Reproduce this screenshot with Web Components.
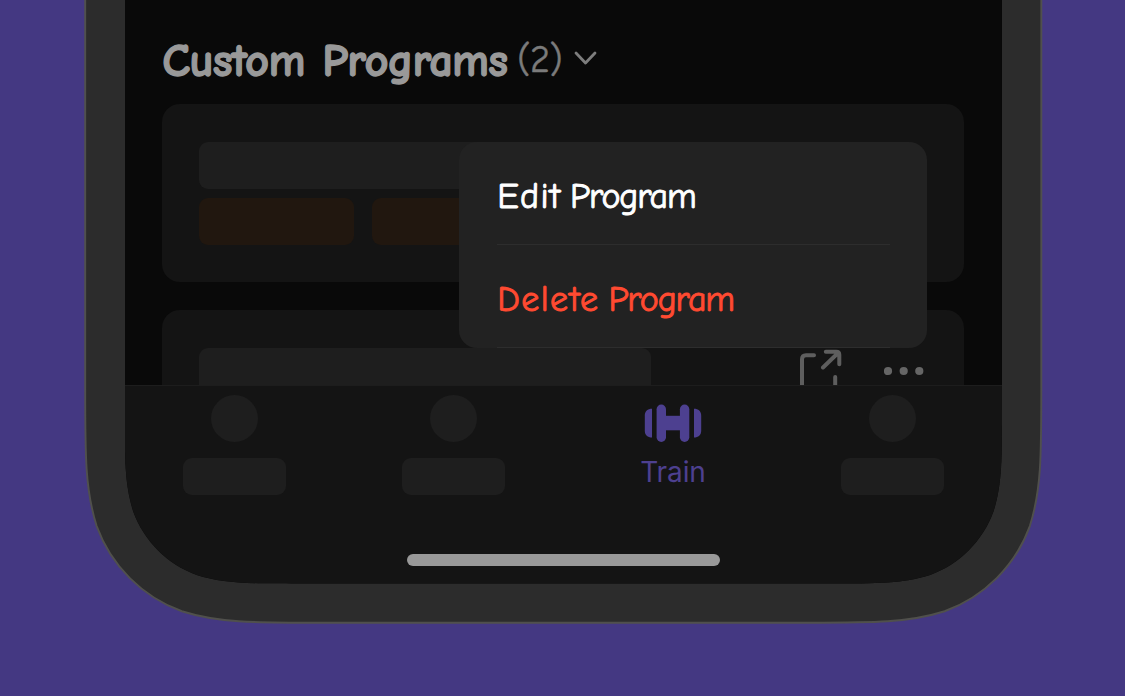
<!DOCTYPE html>
<html lang="en"><head><meta charset="utf-8"><title>Custom Programs</title>
<style>
html,body{margin:0;height:100%;overflow:hidden;background:#443882}
body{font-family:"Comic Sans MS","Comic Neue","Open Sans",sans-serif}
</style></head><body>
<phone-frame>
  <program-list>
    <section-title count="(2)">Custom Programs</section-title>
    <program-card>
      <skeleton-block style="--w:452px;--h:47px"></skeleton-block>
      <skeleton-block slot="tags" style="--w:155px;--h:47px;--c:#21170f"></skeleton-block>
      <skeleton-block slot="tags" style="--w:155px;--h:47px;--c:#21170f"></skeleton-block>
    </program-card>
    <program-card>
      <skeleton-block style="--w:452px;--h:47px"></skeleton-block>
      <card-actions slot="actions"></card-actions>
    </program-card>
  </program-list>
  <context-menu slot="overlay">
    <menu-item><span style="letter-spacing:1.2px">Edit </span>Program</menu-item>
    <menu-item style="color:#ff4a31"><span style="letter-spacing:1.4px">Delete </span>Program</menu-item>
  </context-menu>
  <tab-bar slot="tabs">
    <tab-item></tab-item><tab-item></tab-item><tab-item active>Train</tab-item><tab-item></tab-item>
  </tab-bar>
</phone-frame>
<script>
const define=(name,html)=>customElements.define(name,class extends HTMLElement{
  constructor(){super();this.attachShadow({mode:'open'}).innerHTML=html}
});

// Continuous-curvature corner on both lower corners of a w by h box.
const shape=(x,w,h,r)=>{
  const R=x+w,p=(a,b)=>`${(x+a*r).toFixed(2)} ${(h-b*r).toFixed(2)}`,q=(a,b)=>`${(R-a*r).toFixed(2)} ${(h-b*r).toFixed(2)}`;
  return `M${x} -5H${R}L${q(0,1.52866)}C${q(0,1.08849)} ${q(0,.86841)} ${q(.07491,.63149)}C${q(.16906,.37282)} ${q(.37282,.16906)} ${q(.63149,.07491)}C${q(.86841,0)} ${q(1.08849,0)} ${q(1.52866,0)}L${p(1.52866,0)}C${p(1.08849,0)} ${p(.86841,0)} ${p(.63149,.07491)}C${p(.37282,.16906)} ${p(.16906,.37282)} ${p(.07491,.63149)}C${p(0,.86841)} ${p(0,1.08849)} ${p(0,1.52866)}Z`;
};
define('phone-frame',`<style>
:host{display:block;position:relative;width:1125px;height:696px;overflow:hidden}
svg{position:absolute;inset:0}
.screen{position:relative;margin-left:124.7px;width:877.3px;height:583.5px;display:grid;grid-template-rows:385px 1fr;background:#090909;clip-path:path('${shape(0,877.3,583.5,114)}')}
.content{overflow:hidden}
</style><svg width="1125" height="696"><path d="${shape(85.2,956.1,622.7,153)}" fill="#2c2c2c" stroke="#50504c" stroke-width="1.9"/></svg>
<div class="screen"><div class="content"><slot></slot></div><slot name="tabs"></slot><slot name="overlay"></slot></div>`);
define('program-list',`<style>:host{display:flex;flex-direction:column;gap:28.5px;padding:0 37.5px}::slotted(section-title){margin-bottom:-28.5px}</style><slot></slot>`);
customElements.define('section-title',class extends HTMLElement{
  constructor(){super();this.attachShadow({mode:'open'}).innerHTML=`<style>
:host{display:flex;align-items:center;height:104.4px;color:#999}
h2{margin:17px 0 0;font-size:46.5px;font-weight:700;line-height:60px;white-space:nowrap;letter-spacing:-.75px;word-spacing:1.8px;width:355px;-webkit-text-stroke:1.3px currentColor}
span{font-size:38px;line-height:50px;margin-top:16px;color:#7b7b7b;width:57px;letter-spacing:-.3px;-webkit-text-stroke:.5px currentColor}
svg{margin-top:11px}</style><h2><slot></slot></h2><span>${this.getAttribute('count')}</span>
<svg width="24" height="16" viewBox="0 0 24 16" fill="none" stroke="#7d7d7d" stroke-width="2.8" stroke-linecap="round" stroke-linejoin="round"><path d="M2 3l9.5 10L21 3"/></svg>`}
});
define('program-card',`<style>
:host{display:flex;flex-direction:column;gap:9px;box-sizing:border-box;height:177.5px;flex:none;padding:37.5px 39px 37px 37px;border-radius:18px;background:#141414}
.top{display:flex;justify-content:space-between}.tags{display:flex;gap:18px}</style>
<div class="top"><slot></slot><slot name="actions"></slot></div><div class="tags"><slot name="tags"></slot></div>`);
define('skeleton-block',`<style>:host{display:block;width:var(--w);height:var(--h);border-radius:var(--r,9px);background:var(--c,#1e1e1e)}</style>`);
define('card-actions',`<style>:host{display:flex;gap:42px}svg{display:block}</style>
<svg width="43" height="47" viewBox="799 348 43 47" fill="none" stroke="#5e5e5e" stroke-width="4" stroke-linecap="round" stroke-linejoin="round"><path d="M814 355.2h-8q-4 0-4 4V395M835.2 377v18M825.8 351.7h10.5q3 0 3 3v9.6M838 353l-15 14.5"/></svg>
<svg width="41" height="47" viewBox="884 348 41 47" fill="#666"><circle cx="888" cy="371" r="4.1"/><circle cx="903.7" cy="371" r="4.1"/><circle cx="919.3" cy="371" r="4.1"/></svg>`);
define('context-menu',`<style>:host{position:absolute;left:334.5px;top:142px;width:468px;height:205.7px;box-sizing:border-box;padding:0 37.5px;border-radius:18px;background:#222;color:#fff;display:grid;grid-template-rows:103px 103px}</style><slot></slot>`);
define('menu-item',`<style>:host{display:block;box-sizing:border-box;border-bottom:1.5px solid #2d2d2d;font-size:36px;line-height:96px;letter-spacing:-1.2px;word-spacing:-4.5px;white-space:pre;padding:7px 0 0 .5px;overflow:hidden;-webkit-text-stroke:.9px currentColor}</style><slot></slot>`);
define('tab-bar',`<style>:host{display:grid;grid-template:167.5px 12px/repeat(4,1fr);box-sizing:border-box;height:199px;border-top:1px solid #1d1d1d;background:#141414}
i{grid-column:1/-1;justify-self:center;width:313.5px;height:12px;border-radius:6px;background:#999}</style><slot></slot><i></i>`);
customElements.define('tab-item',class extends HTMLElement{
  constructor(){super();const on=this.hasAttribute('active');this.attachShadow({mode:'open'}).innerHTML=`<style>
:host{display:flex;flex-direction:column;align-items:center;gap:16px;padding-top:8.6px;color:#4d4090;font:28px/1 Inter,sans-serif}
svg{display:block;margin-bottom:-15.5px}.label{letter-spacing:-.1px;line-height:38px}</style>`+(on?
`<svg width="58" height="58" viewBox="644 394.5 58 58" fill="currentColor"><path d="M652 408.3v28.8c-4.4 0-7.2-2.4-7.2-6.8v-15.2c0-4.4 2.8-6.8 7.2-6.8zM694 408.3v28.8c4.4 0 7.2-2.4 7.2-6.8v-15.2c0-4.4-2.8-6.8-7.2-6.8z"/><rect x="656.6" y="404" width="9.4" height="37.4" rx="4.7"/><rect x="679.9" y="404" width="9.4" height="37.4" rx="4.7"/><path d="M665 415.3h16v14.5h-16z"/></svg><span class="label"><slot></slot></span>`:
`<skeleton-block style="--w:47px;--h:47px;--r:50%"></skeleton-block><skeleton-block style="--w:103px;--h:37.5px"></skeleton-block>`)}
});
</script></body></html>
